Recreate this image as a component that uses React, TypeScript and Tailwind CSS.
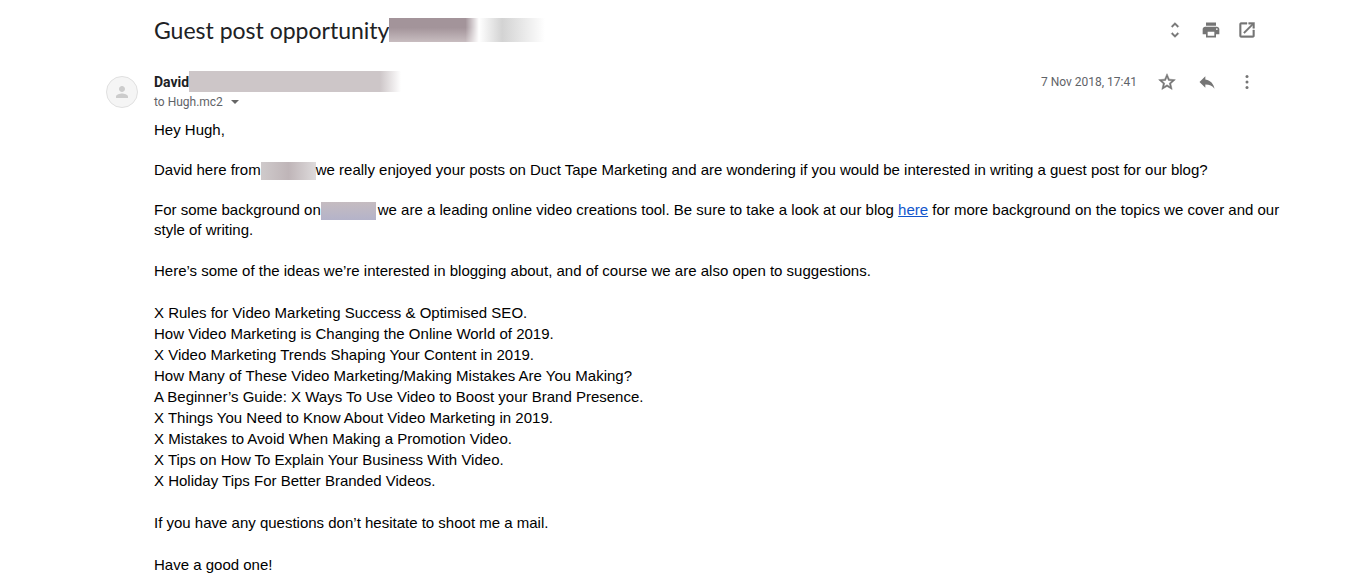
import type { ReactNode } from 'react'

const ideas = [
    'X Rules for Video Marketing Success & Optimised SEO.',
    'How Video Marketing is Changing the Online World of 2019.',
    'X Video Marketing Trends Shaping Your Content in 2019.',
    'How Many of These Video Marketing/Making Mistakes Are You Making?',
    'A Beginner’s Guide: X Ways To Use Video to Boost your Brand Presence.',
    'X Things You Need to Know About Video Marketing in 2019.',
    'X Mistakes to Avoid When Making a Promotion Video.',
    'X Tips on How To Explain Your Business With Video.',
    'X Holiday Tips For Better Branded Videos.',
]

function IconButton({ label, children }: { label: string; children: ReactNode }) {
    return (
        <button type="button" aria-label={label} className="flex size-5 items-center justify-center text-[#757575]">
            <svg viewBox="0 0 24 24" className="size-5 fill-current">{children}</svg>
        </button>
    )
}

function Header() {
    return (
        <header className="flex h-9 items-center justify-between pr-7">
            <div className="flex items-center">
                <h1 className="font-['Lato',sans-serif] text-[23px] leading-6 whitespace-nowrap text-[#202124]">Guest post opportunity</h1>
                <span className="h-6 w-[90px] bg-linear-to-b from-[#a3949a] from-40% to-[#c8bdc0] mask-r-from-85% mask-r-to-100%" />
                <span className="h-6 w-[66px] bg-linear-to-r from-white via-[#d3d3d3] via-35% to-white" />
            </div>
            <div className="flex gap-4">
                <IconButton label="Expand all">
                    <path d="M12 5.83L15.17 9l1.41-1.41L12 3 7.41 7.59 8.83 9 12 5.83zm0 12.34L8.83 15l-1.41 1.41L12 21l4.59-4.59L15.17 15 12 18.17z" stroke="currentColor" strokeWidth=".4" />
                </IconButton>
                <IconButton label="Print all">
                    <path d="M19 8H5c-1.66 0-3 1.34-3 3v6h4v4h12v-4h4v-6c0-1.66-1.34-3-3-3zm-3 11H8v-5h8v5zm3-7c-.55 0-1-.45-1-1s.45-1 1-1 1 .45 1 1-.45 1-1 1zm-1-9H6v4h12V3z" />
                </IconButton>
                <IconButton label="In new window">
                    <path d="M19 19H5V5h7V3H5a2 2 0 0 0-2 2v14a2 2 0 0 0 2 2h14c1.100 0 2-.9 2-2v-7h-2v7zM14 3v2h3.590l-9.830 9.830 1.410 1.410L19 6.410V10h2V3h-7z" stroke="currentColor" strokeWidth=".5" />
                </IconButton>
            </div>
        </header>
    )
}

function Sender() {
    return (
        <div className="flex justify-between pr-7 font-['Roboto',sans-serif]">
            <div>
                <div className="flex h-[21px] items-center">
                    <span className="text-sm font-bold text-[#202124]">David</span>
                    <span className="h-[21px] w-[212px] bg-linear-to-r from-[#cdc6c8] from-90% to-white" />
                </div>
                <button type="button" className="flex h-5 items-center gap-1.5 text-xs text-[#5f6368]">
                    to Hugh.mc2
                    <svg viewBox="0 0 12 12" className="size-3 fill-[#666]"><path d="M2 4h8L6 8z" /></svg>
                </button>
            </div>
            <div className="flex h-[22px] items-center gap-5">
                <time className="text-xs text-[#5f6368]">7 Nov 2018, 17:41</time>
                <IconButton label="Star">
                    <path d="M22 9.240l-7.190-.620L12 2 9.190 8.630 2 9.240l5.460 4.730L5.820 21 12 17.270 18.180 21l-1.630-7.030L22 9.240zM12 15.400l-3.760 2.270 1-4.280-3.320-2.880 4.380-.380L12 6.100l1.710 4.040 4.380.380-3.320 2.880 1 4.280L12 15.400z" stroke="currentColor" strokeWidth=".6" />
                </IconButton>
                <IconButton label="Reply">
                    <path d="M10 9V5l-7 7 7 7v-4.100c5 0 8.500 1.600 11 5.100-1-5-4-10-11-11z" />
                </IconButton>
                <IconButton label="More">
                    <circle cx="12" cy="5.5" r="1.800" />
                    <circle cx="12" cy="12" r="1.800" />
                    <circle cx="12" cy="18.500" r="1.800" />
                </IconButton>
            </div>
        </div>
    )
}

function Message() {
    return (
        <div className="font-['Liberation_Sans',Arial,sans-serif] text-[15px] leading-5 text-black">
            <p>Hey Hugh,</p>
            <p className="mt-5">
                David here from
                <span className="inline-block h-[18px] w-[55px] bg-linear-to-r from-[#cfcacb] via-[#bfb5b8] to-[#dedbdc] align-middle" />
                we really enjoyed your posts on Duct Tape Marketing and are wondering if you would be interested in writing a guest post for our blog?
            </p>
            <p className="mt-5">
                For some background on
                <span className="mr-0.5 inline-block h-[18px] w-[55px] bg-linear-to-b from-[#c5bcc0] to-[#b4b3c9] align-middle" />
                we are a leading online video creations tool. Be sure to take a look at our blog{' '}
                <a href="#blog" className="text-[#1155cc] underline">here</a> for more background on the topics we cover and our style of writing.
            </p>
            <div className="mt-5 leading-[21px]">
                <p>Here’s some of the ideas we’re interested in blogging about, and of course we are also open to suggestions.</p>
                <ul className="my-[21px]">
                    {ideas.map((idea) => <li key={idea}>{idea}</li>)}
                </ul>
                <p>If you have any questions don’t hesitate to shoot me a mail.</p>
                <p className="mt-[21px]">Have a good one!</p>
            </div>
        </div>
    )
}

export default function App() {
    return (
        <main className="grid grid-cols-[32px_1fr] gap-x-4 bg-white pt-3 pr-[81px] pl-[106px]">
            <div className="col-start-2">
                <Header />
            </div>
            <div className="col-start-1 mt-7 flex size-8 items-center justify-center rounded-full border border-[#e0e0e0] bg-[#f5f5f5]">
                <svg viewBox="0 0 24 24" className="size-[18px] fill-[#ccc]">
                    <path d="M12 12c2.210 0 4-1.790 4-4s-1.790-4-4-4-4 1.790-4 4 1.790 4 4 4zm0 2c-2.670 0-8 1.340-8 4v2h16v-2c0-2.660-5.330-4-8-4z" />
                </svg>
            </div>
            <div className="mt-[23px] flex flex-col gap-2">
                <Sender />
                <Message />
            </div>
        </main>
    )
}
